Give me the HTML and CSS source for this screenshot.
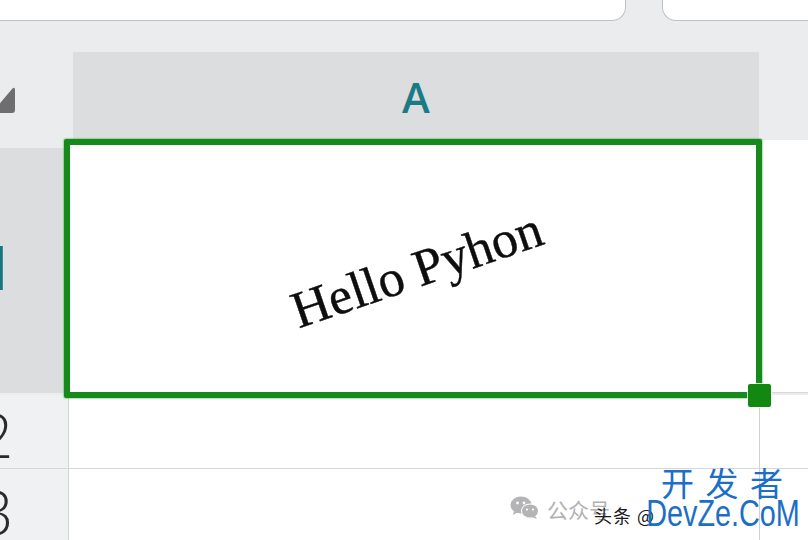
FILE: index.html
```html
<!DOCTYPE html>
<html lang="zh">
<head>
<meta charset="utf-8">
<link rel="stylesheet" href="styles.css">
</head>
<body>
<div class="page">
  <div class="tabs">
    <div class="tab tab-left"></div>
    <div class="tab tab-right"></div>
  </div>
  <div class="sheet">
    <div class="corner">
      <svg class="corner-mark" width="16" height="28" viewBox="0 0 16 28"><path d="M-4 22 L12 3 Q15 0 15 4 L15 24 Q15 27 12 27 L-4 27 Z" fill="#6e6e70"/></svg>
    </div>
    <div class="colhead"><span class="colhead-label">A</span></div>
    <div class="colhead-rest"></div>

    <div class="rowhead rowhead-active"><span class="rownum rownum-active">1</span></div>
    <div class="cell-selected">
      <span class="cell-text">Hello Pyhon</span>
      <span class="fill-handle"></span>
    </div>
    <div class="cell cell-b1"></div>

    <div class="rowhead"><span class="rownum">2</span></div>
    <div class="cell cell-a"></div>
    <div class="cell cell-b"></div>

    <div class="rowhead"><span class="rownum">3</span></div>
    <div class="cell cell-a"></div>
    <div class="cell cell-b"></div>
  </div>

  <div class="watermark">
    <svg class="wechat" width="30" height="24" viewBox="0 0 30 24">
      <ellipse cx="11" cy="9" rx="10.5" ry="8.5" fill="#b4b4b6"/>
      <path d="M4 15 L3 19 L8 16 Z" fill="#b4b4b6"/>
      <ellipse cx="20" cy="15" rx="9" ry="7.5" fill="#fff"/>
      <ellipse cx="20" cy="15" rx="8" ry="6.6" fill="#b4b4b6"/>
      <path d="M25 20 L27 23 L22 21 Z" fill="#b4b4b6"/>
      <circle cx="7.5" cy="7" r="1.4" fill="#fff"/>
      <circle cx="14" cy="7" r="1.4" fill="#fff"/>
      <circle cx="17" cy="13.5" r="1.1" fill="#fff"/>
      <circle cx="23" cy="13.5" r="1.1" fill="#fff"/>
    </svg>
    <span class="wm-gray">公众号</span>
    <span class="wm-black">头条 @</span>
    <div class="wm-brand">
      <span class="wm-cn">开 发 者</span>
      <span class="wm-en">DevZe.CoM</span>
    </div>
  </div>
</div>
</body>
</html>
```

FILE: styles.css
```css
html, body {
  margin: 0;
  padding: 0;
}
body {
  width: 808px;
  height: 540px;
  overflow: hidden;
  background: #ebecee;
  font-family: "Open Sans", "Liberation Sans", sans-serif;
}
.page {
  position: relative;
  width: 808px;
  height: 540px;
  overflow: hidden;
}
.tabs {
  display: flex;
  justify-content: space-between;
  height: 21px;
}
.tab {
  background: #ffffff;
  border-bottom: 1.5px solid #bfc0c2;
  box-sizing: border-box;
}
.tab-left {
  width: 626px;
  border-right: 1.5px solid #bfc0c2;
  border-bottom-right-radius: 14px;
}
.tab-right {
  width: 146px;
  border-left: 1.5px solid #bfc0c2;
  border-bottom-left-radius: 14px;
}
.sheet {
  margin-top: 31px;
  display: grid;
  grid-template-columns: 69px 690px 49px;
  grid-template-rows: 88px 255px 74px 80px;
}
.corner {
  display: flex;
  align-items: center;
  padding-top: 8px;
}
.corner-mark {
  display: block;
}
.colhead {
  margin-left: 4px;
  background: #dcdddf;
  display: flex;
  align-items: center;
  justify-content: center;
}
.colhead-label {
  font-family: "Open Sans", sans-serif;
  font-weight: 600;
  font-size: 42px;
  color: #1a7b86;
  line-height: 1;
  margin-top: 2px;
}
.rowhead {
  background: #f0f1f3;
  border-right: 1px solid #d2d3d5;
  border-bottom: 1px solid #d6d7d9;
  overflow: hidden;
  display: flex;
  align-items: center;
}
.rowhead-active {
  background: #dcdddf;
  border: none;
  margin: 8px 5px 2px 0;
}
.rownum {
  font-family: "Open Sans", sans-serif;
  font-weight: 300;
  font-size: 60px;
  color: #2a2a2a;
  line-height: 1;
  margin-left: -21px;
  margin-top: 6px;
}
.rownum-active {
  font-weight: 700;
  color: #177680;
  margin-left: -22px;
  margin-top: -8px;
}
.cell-selected {
  position: relative;
  margin: -1px -3px -3px -5px;
  border: 6px solid #168a1a;
  border-radius: 2px;
  background: #ffffff;
  display: flex;
  align-items: center;
  justify-content: center;
  box-shadow: 0 0 1px 1px rgba(40, 170, 40, 0.35);
}
.cell-text {
  font-family: "Liberation Serif", "Times New Roman", serif;
  font-size: 52px;
  color: #0e0e0e;
  transform: rotate(-19deg);
  white-space: nowrap;
  margin-top: 2px;
  margin-left: 8px;
  -webkit-text-stroke: 0.4px #0e0e0e;
}
.fill-handle {
  position: absolute;
  right: -15px;
  bottom: -15px;
  width: 23px;
  height: 23px;
  background: #128812;
  border-radius: 2px;
  box-shadow: 0 0 0 1px rgba(255,255,255,0.8);
}
.cell {
  background: #ffffff;
}
.cell-b1 {
  border-bottom: 1px solid #d6d7d9;
  margin-bottom: 2px;
}
.cell-a {
  border-bottom: 1px solid #d6d7d9;
}
.cell-b {
  border-left: 1px solid #d0d1d3;
  border-bottom: 1px solid #d6d7d9;
}
.watermark {
  position: absolute;
  right: 11px;
  bottom: 8px;
  display: flex;
  align-items: flex-end;
}
.wechat {
  display: block;
  margin-right: 7px;
  margin-bottom: 12px;
}
.wm-gray {
  font-family: "Noto Sans CJK SC", sans-serif;
  font-size: 21px;
  color: #b2b2b4;
  line-height: 1;
  margin-bottom: 12px;
}
.wm-black {
  font-family: "Noto Sans CJK SC", sans-serif;
  font-size: 18px;
  color: #1a1a1a;
  line-height: 1;
  margin-left: -16px;
  margin-bottom: 8px;
  letter-spacing: 1px;
}
.wm-brand {
  display: flex;
  flex-direction: column;
  align-items: center;
  margin-left: -6px;
  width: 148px;
}
.wm-cn {
  font-family: "Noto Sans CJK SC", sans-serif;
  font-size: 33px;
  color: #1c6fc4;
  line-height: 1;
  letter-spacing: 2px;
  white-space: pre;
}
.wm-en {
  font-family: "Liberation Sans", sans-serif;
  font-size: 36px;
  color: #1c6fc4;
  line-height: 1;
  transform: scaleX(0.8);
  white-space: nowrap;
  margin-top: -3px;
}
```
